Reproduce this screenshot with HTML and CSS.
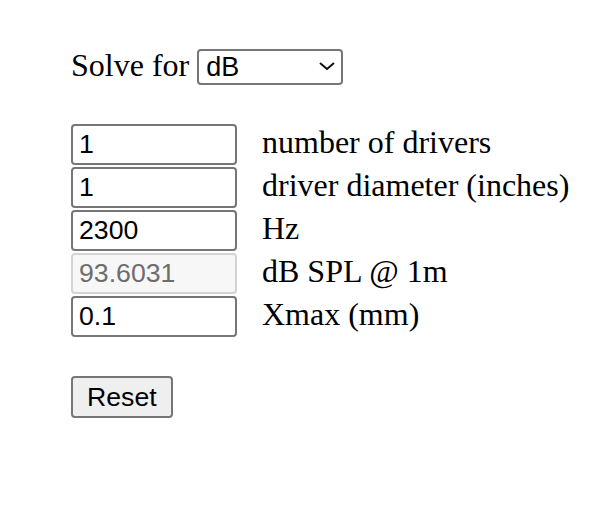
FILE: index.html
```html
<!DOCTYPE html>
<html lang="en">
<head>
    <meta charset="UTF-8">
    <meta name="viewport" content="width=device-width, initial-scale=1.0">
    <title>Driver SPL Calculator</title>
    <link rel="stylesheet" href="styles.css">
</head>
<body>
    <div class="calc">
      <p class="solve">
        <span>Solve for</span>
        <span class="select-wrap">
          <select id="solveFor">
            <option>dB</option>
            <option>Xmax</option>
            <option>Hz</option>
            <option>drivers</option>
            <option>diameter</option>
          </select>
          <svg class="chevron" width="16" height="8" viewBox="0 0 16 8"><path d="M1 1 L8 7 L15 1" fill="none" stroke="#111" stroke-width="2"/></svg>
        </span>
      </p>

      <div class="fields">
        <input type="text" id="count" value="1">
        <span class="label">number of drivers</span>
        <input type="text" id="diameter" value="1">
        <span class="label">driver diameter (inches)</span>
        <input type="text" id="hz" value="2300">
        <span class="label">Hz</span>
        <input type="text" id="db" value="93.6031" disabled>
        <span class="label">dB SPL @ 1m</span>
        <input type="text" id="xmax" value="0.1">
        <span class="label">Xmax (mm)</span>
      </div>

      <button class="reset" type="button">Reset</button>
    </div>
</body>
</html>
```

FILE: styles.css
```css
body {
  margin: 0;
  font-family: "Liberation Serif", "Times New Roman", serif;
  font-size: 32px;
  color: #000;
  background: #fff;
}

.calc {
  padding: 47px 0 0 71px;
}

.solve {
  display: flex;
  align-items: baseline;
  gap: 8px;
  margin: 0;
}

.select-wrap {
  position: relative;
  display: inline-block;
}

.select-wrap select {
  appearance: none;
  -webkit-appearance: none;
  width: 146px;
  height: 36px;
  box-sizing: border-box;
  padding: 0 0 0 7px;
  border: 2px solid #767676;
  border-radius: 4px;
  background: #fff;
  font-family: "Liberation Sans", Arial, sans-serif;
  font-size: 27px;
  color: #000;
}

.chevron {
  position: absolute;
  right: 8px;
  top: 15px;
  pointer-events: none;
}

.fields {
  display: grid;
  grid-template-columns: 166px auto;
  column-gap: 25px;
  row-gap: 2px;
  align-items: baseline;
  margin-top: 39px;
}

.fields input {
  width: 166px;
  height: 41px;
  box-sizing: border-box;
  margin: 0;
  padding: 2px 6px;
  border: 2px solid #767676;
  border-radius: 4px;
  font-family: "Liberation Sans", Arial, sans-serif;
  font-size: 26.67px;
  color: #000;
  background: #fff;
}

.fields input:disabled {
  background: #f7f7f7;
  border-color: #d4d4d4;
  color: #6d6d6d;
}

.reset {
  margin-top: 39px;
  height: 42px;
  padding: 2px 14px;
  border: 2px solid #767676;
  border-radius: 4px;
  background: #efefef;
  font-family: "Liberation Sans", Arial, sans-serif;
  font-size: 26.67px;
  color: #000;
}
```
